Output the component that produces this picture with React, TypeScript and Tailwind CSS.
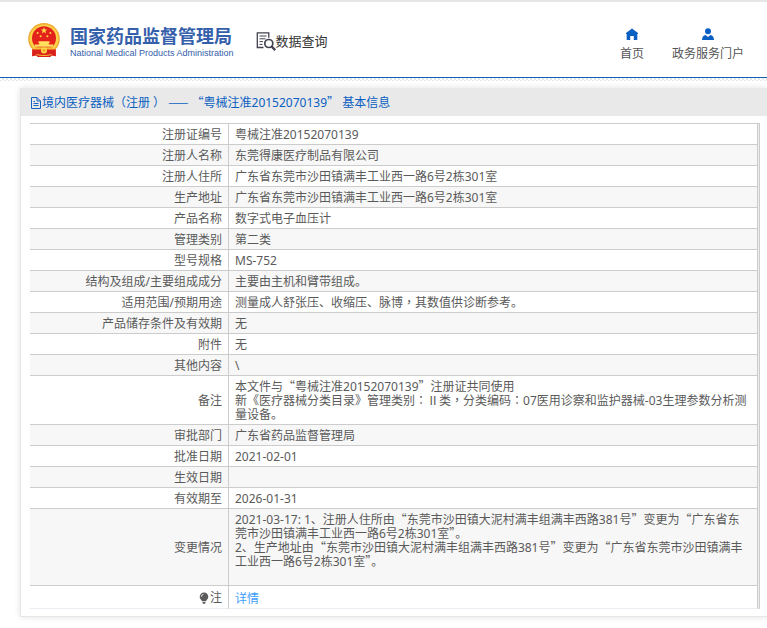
import React from "react";

const baseFont = "font-['Noto_Sans','Noto_Sans_CJK_SC',sans-serif]";

type Row = { label: string; lines: string[]; trailingBlank?: boolean };

const rows: Row[] = [
  { label: "注册证编号", lines: ["粤械注准20152070139"] },
  { label: "注册人名称", lines: ["东莞得康医疗制品有限公司"] },
  { label: "注册人住所", lines: ["广东省东莞市沙田镇满丰工业西一路6号2栋301室"] },
  { label: "生产地址", lines: ["广东省东莞市沙田镇满丰工业西一路6号2栋301室"] },
  { label: "产品名称", lines: ["数字式电子血压计"] },
  { label: "管理类别", lines: ["第二类"] },
  { label: "型号规格", lines: ["MS-752"] },
  { label: "结构及组成/主要组成成分", lines: ["主要由主机和臂带组成。"] },
  { label: "适用范围/预期用途", lines: ["测量成人舒张压、收缩压、脉博，其数值供诊断参考。"] },
  { label: "产品储存条件及有效期", lines: ["无"] },
  { label: "附件", lines: ["无"] },
  { label: "其他内容", lines: ["\\"] },
  {
    label: "备注",
    lines: [
      "本文件与“粤械注准20152070139”注册证共同使用",
      "新《医疗器械分类目录》管理类别：Ⅱ类，分类编码：07医用诊察和监护器械-03生理参数分析测量设备。",
    ],
  },
  { label: "审批部门", lines: ["广东省药品监督管理局"] },
  { label: "批准日期", lines: ["2021-02-01"] },
  { label: "生效日期", lines: [""] },
  { label: "有效期至", lines: ["2026-01-31"] },
  {
    label: "变更情况",
    lines: [
      "2021-03-17: 1、注册人住所由“东莞市沙田镇大泥村满丰组满丰西路381号”变更为“广东省东莞市沙田镇满丰工业西一路6号2栋301室”。",
      "2、生产地址由“东莞市沙田镇大泥村满丰组满丰西路381号”变更为“广东省东莞市沙田镇满丰工业西一路6号2栋301室”。",
    ],
    trailingBlank: true,
  },
];

// Quotes take a full-width cell; commas and colons sit in the middle of theirs.
function Cjk({ text }: { text: string }) {
  return (
    <>
      {text.split(/([“”—]+|[：，])/).map((part, i) => {
        if (/^[“”—]/.test(part))
          return (
            <span key={i} className="font-['Noto_Sans_CJK_SC',sans-serif] leading-none">
              {part}
            </span>
          );
        if (/^[：，]/.test(part))
          return (
            <span key={i} lang="zh-TW" className="font-['Noto_Sans_CJK_TC',sans-serif] leading-none">
              {part}
            </span>
          );
        return <React.Fragment key={i}>{part}</React.Fragment>;
      })}
    </>
  );
}

function Emblem() {
  return (
    <svg viewBox="0 0 32 34" className="h-[34px] w-8 shrink-0" aria-hidden="true">
      <path d="M4.500 25.500 4.200 33.200 8 32.300 10 34h12l2-1.700 3.800 .9-.3-7.700Z" fill="#d9201c" />
      <circle cx="16" cy="15.800" r="15.800" fill="#eda92e" />
      <circle cx="16" cy="15.800" r="14.400" fill="#fbd24a" />
      <circle cx="16" cy="15.300" r="12" fill="#e3221c" />
      <path d="m16 4.300 .9 2.300h2.400l-1.900 1.500.7 2.400-2.100-1.400-2.100 1.400.7-2.400-1.900-1.500h2.400Z" fill="#ffd84a" />
      <g fill="#ffd84a">
        <circle cx="9.600" cy="10" r="1" />
        <circle cx="22.400" cy="10" r="1" />
        <circle cx="12.600" cy="13.200" r="1" />
        <circle cx="19.400" cy="13.200" r="1" />
      </g>
      <path d="M11 18.200h10l1.200 1.600h-1.400v1.600h4.400v2.300H6.800v-2.300h4.400v-1.600H9.800Z" fill="#ffe05c" />
      <path d="M5.500 24.200h21l-1.500 2.500h-18Z" fill="#f7bd37" />
      <path d="M4.300 26.500h23.400l.1 6.700-3.800-.9-2 1.700H10l-2-1.700-3.800.9Z" fill="#d9201c" />
      <circle cx="16" cy="27.500" r="3" fill="#ffd84a" />
      <circle cx="16" cy="27.500" r="1.300" fill="#e89a25" />
      <path d="M8.500 31c4.500 1.300 10.500 1.300 15 0v1c-4.500 1.300-10.500 1.300-15 0Z" fill="#f4bb35" />
    </svg>
  );
}

function SearchDocIcon() {
  return (
    <svg viewBox="0 0 20 20" className="h-5 w-5 shrink-0" fill="none" stroke="#41414f" aria-hidden="true">
      <path d="M7.500 16.500H1.300V1.800h11.500v5" strokeWidth="1.300" />
      <path d="M3.500 5h7M3.500 7.800h6M3.500 10.600h3.500M3.500 13.400h3" strokeWidth="1" />
      <circle cx="12.800" cy="12.500" r="4" strokeWidth="1.700" />
      <path d="m15.700 15.600 3.500 3.500" strokeWidth="2.200" />
    </svg>
  );
}

function DocIcon() {
  return (
    <svg viewBox="0 0 12 12" className="h-3 w-3 shrink-0" fill="none" stroke="#1664c0" aria-hidden="true">
      <path d="M1.500 .5h5.500l3.500 3.500v7.500h-9ZM7 .5V4h3.500M3.500 6.500h5M3.500 8.500h5M3.500 4.500H5" />
    </svg>
  );
}

export default function App() {
  return (
    <div className={`bg-white pb-3 text-xs text-[#5a5a5a] ${baseFont}`}>
      <header className="flex h-[78px] items-start border-t-2 border-b border-t-[#e6e6e6] border-b-[#0f60b6] pl-7">
        <a href="#home" className="mt-[21px] flex items-start gap-[10px]">
          <Emblem />
          <span className="flex flex-col pt-[2px] text-[#3460ab]">
            <span className="text-lg leading-[22px] font-bold whitespace-nowrap">国家药品监督管理局</span>
            <span className="font-['Liberation_Sans',sans-serif] text-[9px] leading-3 whitespace-nowrap">
              National Medical Products Administration
            </span>
          </span>
        </a>
        <h1 className="mt-[29px] ml-[22px] flex items-center text-[13px] leading-5 whitespace-nowrap text-[#333]">
          <SearchDocIcon />
          数据查询
        </h1>
        <nav className="mt-[26px] mr-[23px] ml-auto flex gap-7 leading-4 whitespace-nowrap text-[#555]">
          <a href="#index" className="flex flex-col items-center gap-[6px]">
            <svg viewBox="0 0 12 12" className="h-3 w-3" aria-hidden="true">
              <path d="M6 .5 12 5v1h-.7v6H7.800V8H4.200v4H.7V6H0V5Z" fill="#0a5fc2" />
            </svg>
            首页
          </a>
          <a href="#portal" className="flex flex-col items-center gap-[6px]">
            <svg viewBox="0 0 12 12" className="h-3 w-3" aria-hidden="true">
              <circle cx="6" cy="3.200" r="3" fill="#0a5fc2" />
              <path d="M0 12c0-3 1.500-4.500 3.600-4.900L6 9l2.400-1.900C10.500 7.500 12 9 12 12Z" fill="#0a5fc2" />
            </svg>
            政务服务门户
          </a>
        </nav>
      </header>
      <div className="h-[3px] bg-[repeating-conic-gradient(#e8e8e8_0_25%,#fff_0_50%)] bg-size-[4px_4px]" />

      <main className="mt-[7px] ml-5 border-b border-l border-[#e6e6e6] shadow-[0_0_6px_rgba(0,0,0,0.12)]">
        <h2 className="flex h-7 items-center bg-[#e9e9e9] pt-px pl-[9px] text-xs whitespace-pre text-[#0a5fc2]">
          <DocIcon />
          <span>
            <Cjk text="境内医疗器械（注册 ） —— “粤械注准20152070139” 基本信息" />
          </span>
        </h2>
        <div className="pt-[7px] pr-[7px] pb-[7px] pl-[9px]">
          <div className="border-t border-r border-[#ccc] bg-[#ececf2] pr-px">
            <table className="w-full table-fixed border-separate border-spacing-0 leading-[14px]">
              <colgroup>
                <col className="w-[199px]" />
                <col />
              </colgroup>
              <tbody>
                {rows.map((row) => (
                  <tr key={row.label} className="bg-white even:bg-[#f7f7f7]">
                    <th scope="row" className="border-r border-b border-[#ccc] pt-1 pr-1.5 pb-0.5 text-right font-normal">
                      {row.label}
                    </th>
                    <td className="border-r border-b border-[#ccc] px-1.5 pt-1 pb-0.5">
                      {row.lines.map((line, i) => (
                        <p key={i}>
                          <Cjk text={line} />
                        </p>
                      ))}
                      {row.trailingBlank && <br />}
                    </td>
                  </tr>
                ))}
                <tr className="bg-white">
                  <th scope="row" className="border-r border-b border-r-[#ccc] border-b-[#ececf2] pt-[5px] pr-1.5 pb-[3px] font-normal">
                    <span className="flex items-center justify-end gap-px">
                      <svg viewBox="0 0 10 12" className="h-3 w-[10px]" aria-hidden="true">
                        <path d="M5 .5a4.300 4.300 0 0 1 4.300 4.300C9.300 7 7.500 8 7 9.200H3C2.500 8 .7 7 .7 4.800A4.300 4.300 0 0 1 5 .5ZM3.500 10h3v1l-.7.800H4.200L3.500 11Z" fill="#5a5a5a" />
                        <path d="M2.300 4.800A2.500 2.500 0 0 1 4.500 2.300" fill="none" stroke="#fff" strokeWidth=".8" />
                      </svg>
                      注
                    </span>
                  </th>
                  <td className="border-r border-b border-r-[#ccc] border-b-[#ececf2] px-1.5 pt-1.5 pb-0.5">
                    <a href="#detail" className="text-[#409eff]">
                      详情
                    </a>
                  </td>
                </tr>
              </tbody>
            </table>
          </div>
        </div>
      </main>
    </div>
  );
}
